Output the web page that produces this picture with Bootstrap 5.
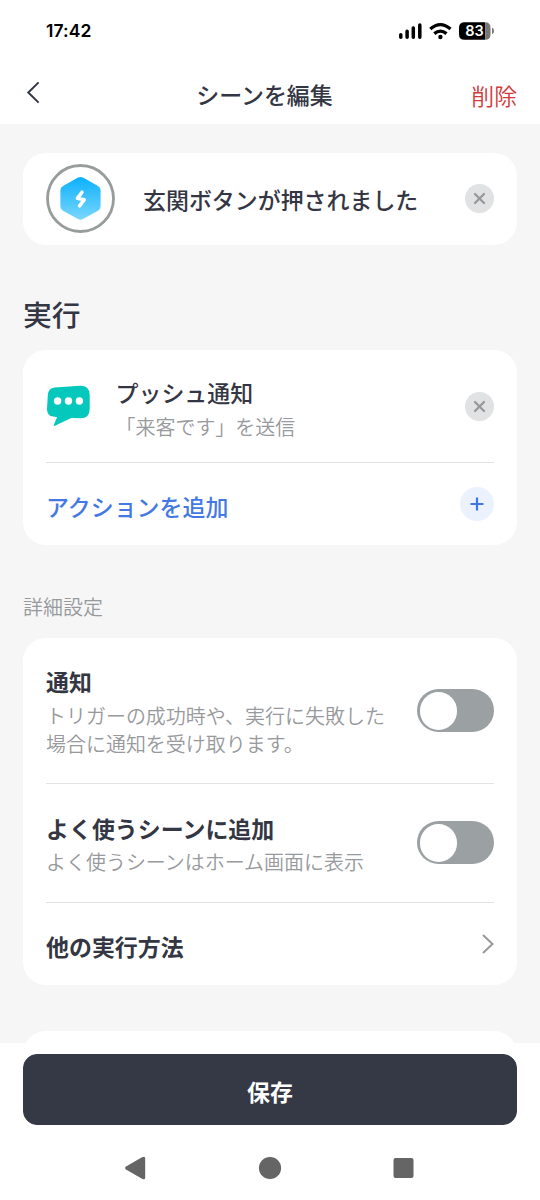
<!DOCTYPE html>
<html lang="ja">
<head>
<meta charset="utf-8">
<meta name="viewport" content="width=device-width, initial-scale=1">
<title>シーンを編集</title>
<link href="https://cdn.jsdelivr.net/npm/bootstrap@5.3.0/dist/css/bootstrap.min.css" rel="stylesheet">
<style>
  body { font-family: "Noto Sans CJK JP", sans-serif; color: #343743; background: #f6f6f6; }
  svg { display: block; flex: none; }
  .screen { height: 1200px; }
  .status-bar { height: 62px; padding: 0 46px; }
  .clock { font: 600 17.5px/24px Inter, sans-serif; color: #000; letter-spacing: .1px; }
  .app-header { height: 62px; padding: 0 23px; }
  .header-side { width: 80px; }
  .app-title, .item-title { font-size: 22.95px; line-height: 34px; font-weight: 500; }
  .item-title.strong { font-weight: 700; }
  .app-title { padding: 2px 11px 0 0; }
  .delete-link { font-size: 22.85px; line-height: 34px; font-weight: 350; color: #d3383a; padding-top: 3px; }
  .content-area { padding: 29px 23px 0; }
  .panel { border: 0; border-radius: 23px; padding: 0 23px; background: #fff; }
  .trigger { height: 92px; padding-bottom: 1px; }
  .section-title { font-size: 28.8px; line-height: 40px; font-weight: 500; margin: 48.5px 0 16.5px; }
  .section-label { font-size: 19.98px; line-height: 28px; font-weight: 350; color: #97999c; margin: 48px 0 17px; }
  .item-sub { font-size: 19.98px; line-height: 28px; font-weight: 350; color: #97999c; }
  .divided { border-bottom: 1px solid #e2e3e4; }
  .row-push { height: 113px; padding-top: 25px; }
  .row-add { height: 82px; padding-bottom: 1px; }
  .row-notify { height: 146px; padding-top: 26px; }
  .row-favorite { height: 119px; padding-top: 27px; }
  .row-other { height: 82px; }
  .add-text { color: #4479e4; }
  .toggle { width: 77px; height: 43px; border-radius: 22px; background: #9ba0a2; padding: 3px 2.5px; flex: none; }
  .toggle span { display: block; width: 37.5px; height: 37.5px; border-radius: 50%; background: #fff; }
  .bottom-bar { height: 157px; padding: 11.4px 23px 0; }
  .btn-save { --bs-btn-bg: #353945; --bs-btn-color: #fff; --bs-btn-border-color: #353945; height: 71px; border-radius: 14px; font-size: 22.95px; font-weight: 700; padding: 3px 0 0; line-height: 34px; }
  .system-nav { padding: 31px 103px 0 102px; }
</style>
</head>
<body>
<div class="screen d-flex flex-column overflow-hidden">
  <div class="status-bar d-flex align-items-center justify-content-between bg-white flex-shrink-0">
    <span class="clock">17:42</span>
    <svg width="96" height="20" viewBox="398 21 96 20">
      <g stroke="#000" stroke-width="3.5" stroke-linecap="round">
        <path d="M400.8 34.8v2.5M407.1 31.2v6.1M413.3 28v9.3M419.800 24.900v12.400"/>
      </g>
      <g fill="none" stroke="#000" stroke-width="3.300">
        <path d="M430.300 29q10-8.800 20.200 0"/>
        <path d="M434.300 33.600q6.100-5 12.200 0"/>
      </g>
      <circle cx="440.400" cy="37" r="2.200"/>
      <path d="M464.500 22.300h20.700v17.400h-20.700q-5.500 0-5.500-5.500v-6.400q0-5.500 5.500-5.500z"/>
      <path d="M485.200 22.300q5.300 0 5.300 5.500v6.400q0 5.500-5.300 5.500z" fill="#777"/>
      <path d="M492 27.700q2 .4 2 3.300t-2 3.300z" fill="#777"/>
      <text x="474.600" y="36.300" text-anchor="middle" font-family="Inter, sans-serif" font-size="14.500" font-weight="600" fill="#fff">83</text>
    </svg>
  </div>
  <header class="app-header d-flex align-items-center bg-white flex-shrink-0">
    <div class="header-side">
      <svg width="20" height="24" viewBox="0 0 20 24"><path d="M15.600 1.400 5.300 11.500l10.300 10.100" fill="none" stroke="#343743" stroke-width="2"/></svg>
    </div>
    <div class="app-title flex-grow-1 text-center text-nowrap">シーンを編集</div>
    <div class="header-side delete-link text-end">削除</div>
  </header>

  <main class="content-area flex-grow-1 overflow-hidden">
    <div class="card panel trigger flex-row align-items-center">
      <svg width="69" height="69" viewBox="0 0 69 69">
        <defs><linearGradient id="hex" x2="0" y2="1"><stop offset="0" stop-color="#0cb0fc"/><stop offset="1" stop-color="#7ad7ff"/></linearGradient></defs>
        <circle cx="34.500" cy="34.500" r="33" fill="#fff" stroke="#979c9c" stroke-width="2.800"/>
        <path d="M32 13.600q2.500-1.400 5 0l15 8.300q2.600 1.400 2.600 4.300v16.300q0 2.900-2.600 4.300l-15 8.300q-2.500 1.400-5 0l-15-8.300q-2.600-1.400-2.600-4.300V26.200q0-2.900 2.600-4.300z" fill="url(#hex)"/>
        <path d="M36 28.200l-4.600 6.200 6.800 1.300-4.600 6.200" fill="none" stroke="#fff" stroke-width="3.500" stroke-linecap="round" stroke-linejoin="round"/>
      </svg>
      <div class="item-title text-nowrap flex-grow-1" style="margin-left:28px">玄関ボタンが押されました</div>
      <svg width="29" height="29" viewBox="0 0 29 29"><circle cx="14.500" cy="14.500" r="14.500" fill="#e1e2e3"/><path d="M10 10l9 9M19 10l-9 9" stroke="#96999b" stroke-width="2.300" stroke-linecap="round"/></svg>
    </div>

    <h2 class="section-title">実行</h2>
    <div class="card panel">
      <div class="row-push divided d-flex">
        <svg width="45" height="43" viewBox="0 0 45 43" style="margin-top:10px">
          <path d="M8.500 2.400 34 .8q9.500-.3 9.700 9v14q0 9.500-9 9.500l-9.500-.2-16.300 7.600q-1.800.7-1-1.200l3.200-7.300-4-.6Q1 31 1 24l.8-14q.5-7 6.700-7.600z" fill="#05c8bd"/>
          <g fill="#fff"><circle cx="11.600" cy="16" r="3.700"/><circle cx="22.500" cy="16" r="3.700"/><circle cx="33.400" cy="16" r="3.700"/></g>
        </svg>
        <div class="flex-grow-1" style="margin-left:24.500px">
          <div class="item-title">プッシュ通知</div>
          <div class="item-sub" style="margin-top:4px">「来客です」を送信</div>
        </div>
        <svg width="29" height="29" viewBox="0 0 29 29" style="margin-top:17px"><circle cx="14.500" cy="14.500" r="14.500" fill="#e1e2e3"/><path d="M10 10l9 9M19 10l-9 9" stroke="#96999b" stroke-width="2.300" stroke-linecap="round"/></svg>
      </div>
      <div class="row-add d-flex align-items-center justify-content-between">
        <div class="item-title add-text pt-1">アクションを追加</div>
        <svg width="34" height="34" viewBox="0 0 34 34"><circle cx="17" cy="17" r="17" fill="#ebf2fe"/><path d="M17 10.500v13M10.500 17h13" stroke="#3c78e8" stroke-width="2.200"/></svg>
      </div>
    </div>

    <div class="section-label">詳細設定</div>
    <div class="card panel">
      <div class="row-notify divided d-flex justify-content-between">
        <div>
          <div class="item-title strong">通知</div>
          <div class="item-sub text-nowrap" style="margin-top:4px">トリガーの成功時や、実行に失敗した<br>場合に通知を受け取ります。</div>
        </div>
        <div class="toggle" style="margin-top:25px"><span></span></div>
      </div>
      <div class="row-favorite divided d-flex justify-content-between">
        <div>
          <div class="item-title strong">よく使うシーンに追加</div>
          <div class="item-sub text-nowrap" style="margin-top:3px">よく使うシーンはホーム画面に表示</div>
        </div>
        <div class="toggle" style="margin-top:10.400px"><span></span></div>
      </div>
      <div class="row-other d-flex align-items-center justify-content-between">
        <div class="item-title strong pt-1">他の実行方法</div>
        <svg width="12" height="20" viewBox="0 0 12 20"><path d="M1 1l9.500 9L1 19" fill="none" stroke="#97999b" stroke-width="2"/></svg>
      </div>
    </div>
    <div class="card panel" style="margin-top:46px;height:80px"></div>
  </main>

  <footer class="bottom-bar bg-white flex-shrink-0">
    <button class="btn btn-save w-100 d-block" type="button">保存</button>
    <div class="system-nav d-flex justify-content-between">
      <svg width="21" height="24" viewBox="0 0 21 24"><path d="M1 10.500 17 1.200q3.200-1.500 3.200 1.400v18.800q0 2.900-3.200 1.400L1 13.500q-1.800-1.500 0-3z" fill="#656565"/></svg>
      <svg width="24" height="24" viewBox="0 0 24 24"><circle cx="12" cy="12" r="11.100" fill="#656565"/></svg>
      <svg width="21" height="24" viewBox="0 0 21 24"><rect x=".5" y="2" width="20" height="20" rx="2" fill="#656565"/></svg>
    </div>
  </footer>
</div>
<script src="https://cdn.jsdelivr.net/npm/bootstrap@5.3.0/dist/js/bootstrap.bundle.min.js"></script>
</body>
</html>
